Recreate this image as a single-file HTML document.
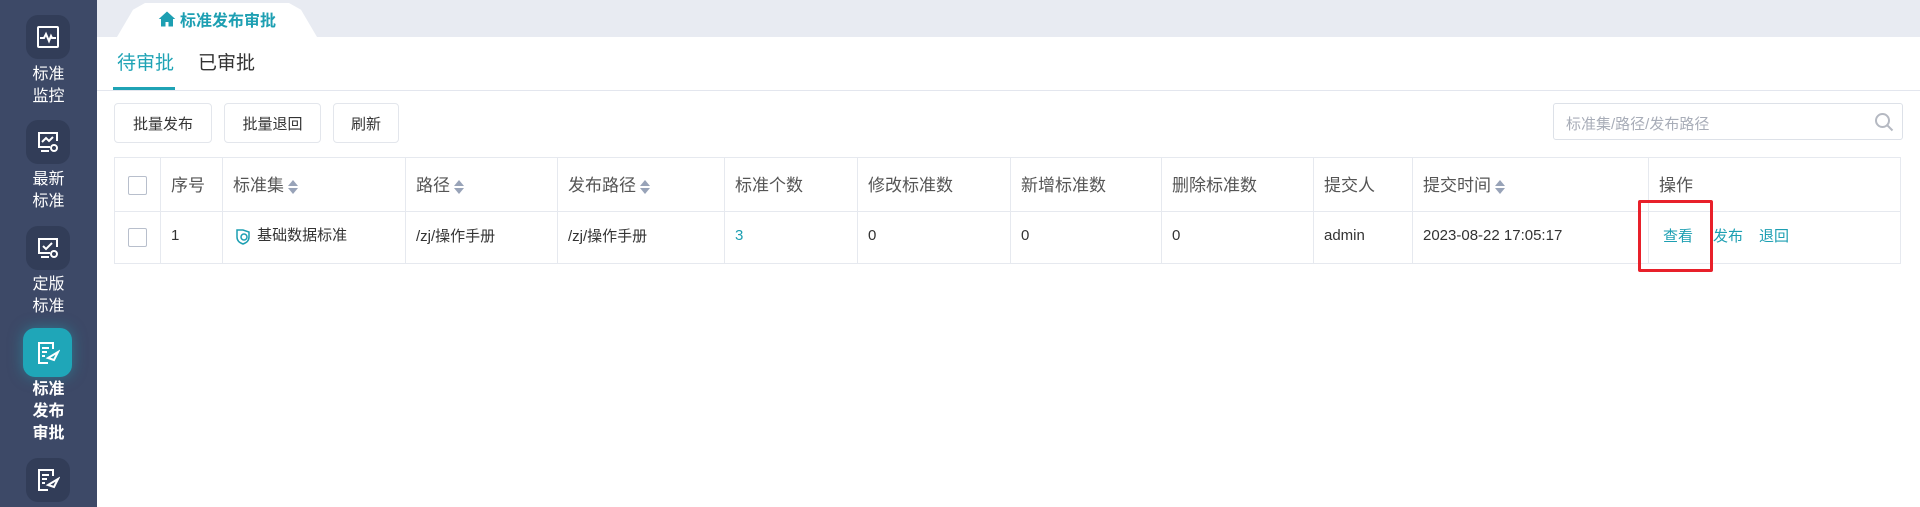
<!DOCTYPE html><html><head><meta charset="utf-8"><style>
*{box-sizing:border-box;margin:0;padding:0}
body{width:1920px;height:507px;overflow:hidden;background:#fff;font-family:"Liberation Sans","Noto Sans CJK SC",sans-serif;position:relative}
.side{position:absolute;left:0;top:0;width:97px;height:507px;background:#3d4967}
.ib{position:absolute;left:26px;width:44px;height:44px;border-radius:12px;background:#323d58;display:flex;align-items:center;justify-content:center}
.ib.act{left:23px;width:49px;height:49px;background:#1fa6b8;box-shadow:0 0 14px rgba(31,166,184,.5)}
.lb{position:absolute;left:0;width:97px;text-align:center;color:#fff;font-size:16px;line-height:22px}
.top{position:absolute;left:97px;top:0;right:0;height:37px;background:#e8ebf2}
.tab{position:absolute;left:20px;top:3px;width:200px;height:34px;background:#fff;clip-path:polygon(0 100%,8% 20%,14% 0,86% 0,92% 20%,100% 100%);color:#1d9fb2;font-size:16px;font-weight:bold;display:flex;align-items:center;justify-content:center;gap:4px;padding-bottom:2px}
.t{position:absolute;top:48px;font-size:19px;color:#333}
.ul{position:absolute;left:113px;top:87px;width:62px;height:3px;background:#1fa3b5}
.hl{position:absolute;left:97px;right:0;top:90px;height:1px;background:#e3e6ee}
.btn{position:absolute;top:103px;height:40px;border:1px solid #e3e6ec;border-radius:4px;font-size:15px;color:#333;display:flex;align-items:center;justify-content:center;background:#fff}
.srch{position:absolute;left:1553px;top:103px;width:350px;height:37px;border:1px solid #dde1e8;border-radius:3px;font-size:15px;color:#a8adb8;padding:9px 12px}
table{position:absolute;left:114px;top:157px;border-collapse:collapse;font-size:16px;color:#333}
td{border:1px solid #e6e9ef;padding:0 10px;white-space:nowrap}
tr.h td{height:54px;color:#555;font-size:17px;padding-bottom:2px}
tr.b td{height:52px;font-size:15px;padding-bottom:4px}
.ar{display:inline-block;vertical-align:middle;margin-left:4px;width:9px;height:14px;position:relative}
.ar:before,.ar:after{content:"";position:absolute;left:0;border-left:5px solid transparent;border-right:5px solid transparent}
.ar:before{top:0;border-bottom:6px solid #98a3b8}.ar:after{bottom:0;border-top:6px solid #98a3b8}
.cb{display:inline-block;width:19px;height:19px;border:1px solid #b8bfcc;border-radius:2px;vertical-align:middle}
.lk{color:#1d9fb2}
.red{position:absolute;left:1638px;top:200px;width:75px;height:72px;border:3px solid #e8202a;border-radius:2px}
</style></head><body>
<div class="side">
<div class="ib" style="top:15px"><svg width="24" height="24" viewBox="0 0 24 24" fill="none" stroke="#fff" stroke-width="2"><rect x="2" y="2" width="20" height="20" rx="1"/><path d="M4 13h4l2-4 3 7 2-5 1 2h4"/></svg></div>
<div class="lb" style="top:64px">标准<br>监控</div>
<div class="ib" style="top:120px"><svg width="24" height="24" viewBox="0 0 24 24" fill="none" stroke="#fff" stroke-width="2"><path d="M14 17H3V3h18v8"/><path d="M6 12l4-4 3 3 4-4"/><path d="M5 21h8"/><circle cx="18" cy="18" r="3"/></svg></div>
<div class="lb" style="top:169px">最新<br>标准</div>
<div class="ib" style="top:226px"><svg width="24" height="24" viewBox="0 0 24 24" fill="none" stroke="#fff" stroke-width="2"><path d="M14 17H3V3h18v8"/><path d="M7 10l3 3 6-6"/><path d="M5 21h8"/><circle cx="18" cy="18" r="3"/></svg></div>
<div class="lb" style="top:274px">定版<br>标准</div>
<div class="ib act" style="top:328px"><svg width="24" height="24" viewBox="0 0 24 24" fill="none" stroke="#fff" stroke-width="2"><path d="M17 8V2H3v20h9"/><path d="M6 7h7M6 11h5M6 15h3"/><path d="M22 11l-10 6 6 2z"/></svg></div>
<div class="lb" style="top:379px;font-weight:bold">标准<br>发布<br>审批</div>
<div class="ib" style="top:458px"><svg width="24" height="24" viewBox="0 0 24 24" fill="none" stroke="#fff" stroke-width="2"><path d="M17 8V2H3v20h9"/><path d="M6 7h7M6 11h5M6 15h3"/><path d="M22 11l-10 6 6 2z"/></svg></div>
</div>
<div class="top"><div class="tab"><svg width="18" height="18" viewBox="0 0 24 24" fill="#1d9fb2"><path d="M12 2L1 12h3v10h6v-6h4v6h6V12h3z"/></svg>标准发布审批</div></div>
<div class="t" style="left:117px;color:#1fa3b5">待审批</div>
<div class="t" style="left:198px">已审批</div>
<div class="ul"></div><div class="hl"></div>
<div class="btn" style="left:114px;width:98px">批量发布</div>
<div class="btn" style="left:224px;width:97px">批量退回</div>
<div class="btn" style="left:333px;width:66px">刷新</div>
<div class="srch">标准集/路径/发布路径<svg style="position:absolute;right:8px;top:8px" width="20" height="20" viewBox="0 0 20 20" fill="none" stroke="#b5b9c2" stroke-width="2"><circle cx="8.5" cy="8.5" r="6.5"/><path d="M13.5 13.5l5 5"/></svg></div>
<table>
<colgroup><col style="width:46px"><col style="width:62px"><col style="width:183px"><col style="width:152px"><col style="width:167px"><col style="width:133px"><col style="width:153px"><col style="width:151px"><col style="width:152px"><col style="width:99px"><col style="width:236px"><col style="width:252px"></colgroup>
<tr class="h"><td style="padding:0 13px"><span class="cb"></span></td><td>序号</td><td>标准集<span class="ar"></span></td><td>路径<span class="ar"></span></td><td>发布路径<span class="ar"></span></td><td>标准个数</td><td>修改标准数</td><td>新增标准数</td><td>删除标准数</td><td>提交人</td><td>提交时间<span class="ar"></span></td><td>操作</td></tr>
<tr class="b"><td style="padding:0 13px"><span class="cb"></span></td><td>1</td><td><svg width="20" height="20" viewBox="0 0 20 20" fill="none" stroke="#1d9fb2" stroke-width="1.5" style="vertical-align:middle"><path d="M4 3v7c0 4 3 6 6 7 3-1 6-3 6-7V5l-6-2z"/><circle cx="11" cy="10" r="3"/></svg> 基础数据标准</td><td>/zj/操作手册</td><td>/zj/操作手册</td><td class="lk">3</td><td>0</td><td>0</td><td>0</td><td>admin</td><td>2023-08-22 17:05:17</td><td><span class="lk" style="margin-left:4px">查看</span><span class="lk" style="margin-left:20px">发布</span><span class="lk" style="margin-left:16px">退回</span></td></tr>
</table>
<div class="red"></div>
</body></html>
